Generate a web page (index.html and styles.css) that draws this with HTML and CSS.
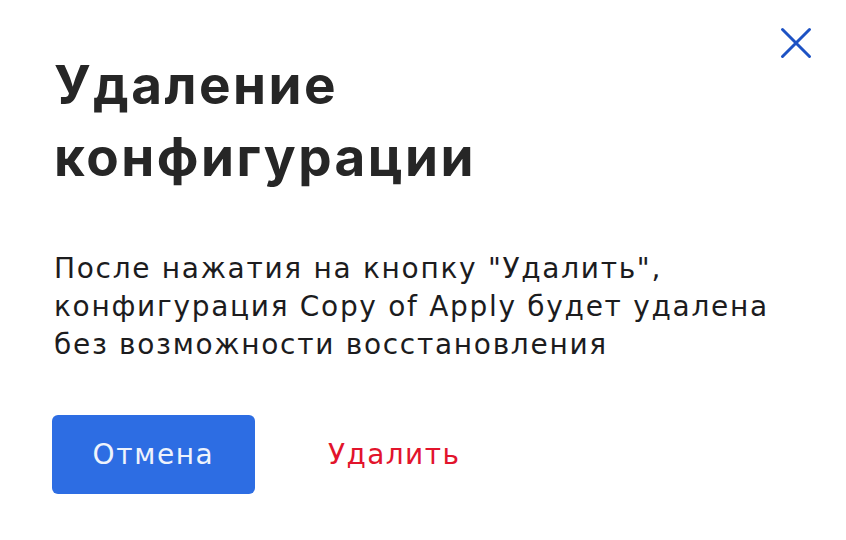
FILE: index.html
```html
<!DOCTYPE html>
<html lang="ru">
<head>
    <meta charset="UTF-8">
    <title>Удаление конфигурации</title>
    <link rel="stylesheet" href="styles.css">
</head>
<body>
    <div class="modal">
        <button class="close" type="button" aria-label="Закрыть">
            <svg width="32" height="32" viewBox="0 0 32 32">
                <path d="M2.5 2.5 L29.5 29.5 M29.5 2.5 L2.5 29.5" stroke="#1d52c4" stroke-width="3" stroke-linecap="round" fill="none"/>
            </svg>
        </button>
        <h1>Удаление конфигурации</h1>
        <p class="message">После нажатия на кнопку "Удалить", конфигурация Copy of Apply будет удалена без возможности восстановления</p>
        <div class="actions">
            <button class="btn-cancel" type="button">Отмена</button>
            <button class="btn-delete" type="button">Удалить</button>
        </div>
    </div>
</body>
</html>
```

FILE: styles.css
```css
body {
    margin: 0;
    background: #fff;
    font-family: "DejaVu Sans", sans-serif;
    color: #1c1c1e;
}
.modal {
    position: relative;
    width: 846px;
    height: 540px;
    box-sizing: border-box;
    padding: 49px 52px 0 54px;
}
.close {
    position: absolute;
    top: 27px;
    right: 34px;
    background: none;
    border: none;
    padding: 0;
    cursor: pointer;
}
h1 {
    margin: 0;
    width: 560px;
    font-family: Inter, sans-serif;
    font-weight: 700;
    font-size: 53px;
    line-height: 72px;
    letter-spacing: 2.5px;
    color: #262626;
}
.message {
    margin: 57px 0 0 0;
    font-size: 28px;
    line-height: 38px;
    letter-spacing: 1.7px;
    max-width: 740px;
}
.actions {
    display: flex;
    align-items: center;
    margin-top: 51px;
    margin-left: -2px;
}
.btn-cancel {
    width: 203px;
    height: 79px;
    border: none;
    border-radius: 6px;
    background: #2d6de3;
    color: #eef3fc;
    font-family: "DejaVu Sans", sans-serif;
    font-size: 28px;
    letter-spacing: 1.6px;
}
.btn-delete {
    margin-left: 73px;
    border: none;
    background: none;
    padding: 0;
    color: #e2142c;
    font-family: "DejaVu Sans", sans-serif;
    font-size: 28px;
    letter-spacing: 1.4px;
}
```
